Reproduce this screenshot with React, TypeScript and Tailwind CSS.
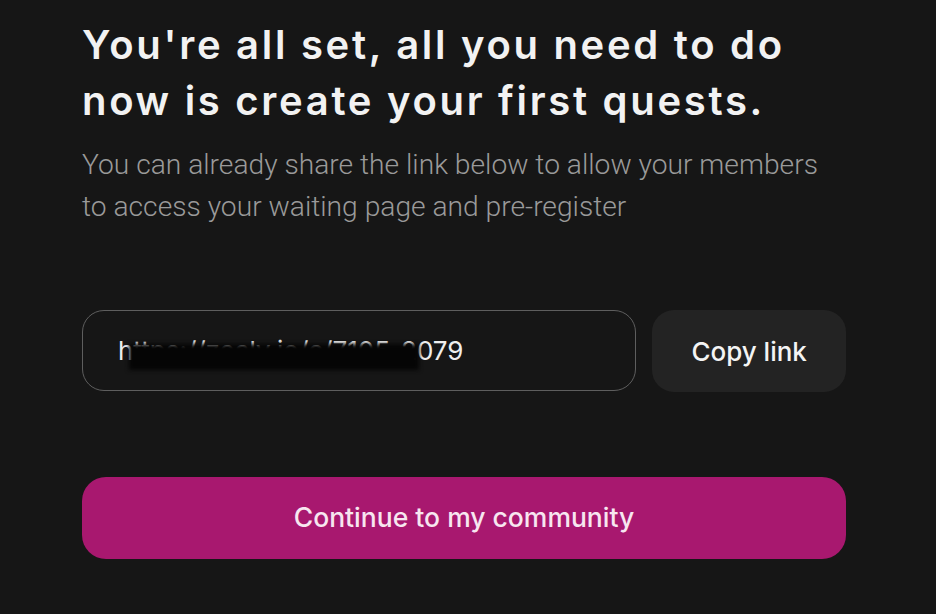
export default function App() {
  return (
    <div className="min-h-[614px] w-full bg-[#161616] overflow-hidden">
      <div className="ml-[82px] w-[764px] pt-[17px]">
        <h1
          className="text-[40px] leading-[56px] font-semibold text-[#f2f2f2] tracking-[2.7px]"
          style={{ fontFamily: 'Inter, "Noto Sans", sans-serif' }}
        >
          You're all set, all you need to do
          <br />
          now is create your first quests.
        </h1>
        <p
          className="mt-[15px] text-[28.2px] leading-[42px] font-light text-[#9a9a9a]"
          style={{ fontFamily: 'Roboto, "Liberation Sans", sans-serif' }}
        >
          You can already share the link below to allow your members
          <br />
          to access your waiting page and pre-register
        </p>

        <div className="mt-[82px] flex gap-4" style={{ fontFamily: 'Inter, "Liberation Sans", sans-serif' }}>
          <div className="relative flex h-[81px] w-[555px] items-center rounded-[22px] border border-[#5e5e5e] px-[35px]">
            <span className="text-[26px] text-[#eeeeee]">https://zealy.io/c/7105-2079</span>
            <span className="absolute left-[46px] top-[33px] h-[26px] w-[290px] bg-[#050505] blur-[2px]" />
          </div>
          <button className="h-[82px] w-[194px] rounded-[22px] bg-[#232323] text-[26px] font-medium text-[#f4f4f4]">
            Copy link
          </button>
        </div>

        <button
          className="mt-[85px] h-[82px] w-full rounded-[24px] bg-[#a8186f] text-[26.5px] font-medium text-[#f7e6f0]"
          style={{ fontFamily: 'Inter, "Liberation Sans", sans-serif' }}
        >
          Continue to my community
        </button>
      </div>
    </div>
  );
}
